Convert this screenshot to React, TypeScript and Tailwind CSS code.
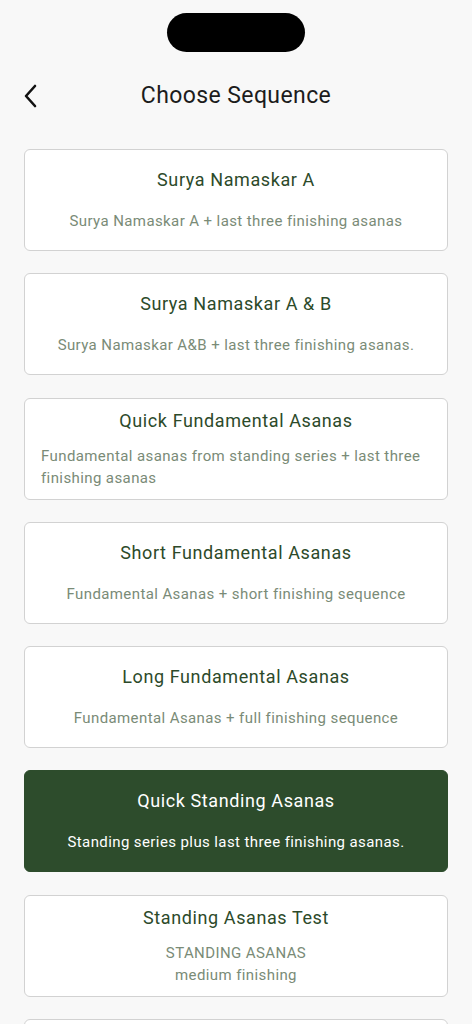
import React from "react";

type Seq = { title: string; lines: string[]; selected?: boolean };

const SEQUENCES: Seq[] = [
  { title: "Surya Namaskar A", lines: ["Surya Namaskar A + last three finishing asanas"] },
  { title: "Surya Namaskar A & B", lines: ["Surya Namaskar A&B + last three finishing asanas."] },
  {
    title: "Quick Fundamental Asanas",
    lines: ["Fundamental asanas from standing series + last three finishing asanas"],
  },
  { title: "Short Fundamental Asanas", lines: ["Fundamental Asanas + short finishing sequence"] },
  { title: "Long Fundamental Asanas", lines: ["Fundamental Asanas + full finishing sequence"] },
  {
    title: "Quick Standing Asanas",
    lines: ["Standing series plus last three finishing asanas."],
    selected: true,
  },
  { title: "Standing Asanas Test", lines: ["STANDING ASANAS", "medium finishing"] },
  { title: "Full Standing Asanas", lines: ["Standing series + full finishing sequence"] },
];

const SequenceCard = ({ seq, index }: { seq: Seq; index: number }) => {
  // the wrapped one (index 2) sits left-aligned and tighter
  const multi = seq.lines.length > 1 || index === 2;
  return (
    <button
      className={`w-full h-[102px] shrink-0 rounded-[6px] border flex flex-col items-center justify-center px-4 ${
        seq.selected ? "bg-[#2d4c2c] border-[#2d4c2c]" : "bg-white border-[#d2d2d2]"
      }`}
    >
      <div
        className={`text-[18px] leading-[24px] tracking-[0.6px] ${
          multi ? "mt-[1px]" : ""
        } ${seq.selected ? "text-white" : "text-[#2c4a2a]"}`}
      >
        {seq.title}
      </div>
      <div
        className={`text-[15px] leading-[22px] tracking-[0.4px] ${
          multi ? "mt-[12px]" : "mt-[18px]"
        } ${index === 2 ? "text-left" : "text-center"} ${
          seq.selected ? "text-white" : "text-[#7a8b77]"
        }`}
      >
        {seq.lines.map((l) => (
          <div key={l}>{l}</div>
        ))}
      </div>
    </button>
  );
};

export default function App() {
  return (
    <div
      className="w-[472px] h-[1024px] overflow-hidden bg-[#f8f8f8]"
      style={{ fontFamily: "Roboto, 'Noto Sans', sans-serif" }}
    >
      <div className="flex justify-center pt-[13px]">
        <div className="w-[138px] h-[39px] rounded-full bg-black" />
      </div>

      <div className="relative flex items-center justify-center h-[44px] mt-[22px]">
        <button className="absolute left-[22px] top-[10px]">
          <svg width="18" height="24" viewBox="0 0 18 24" fill="none">
            <path d="M13 2 L4 12 L13 22" stroke="#111" strokeWidth="2.6" strokeLinecap="round" strokeLinejoin="round" />
          </svg>
        </button>
        <h1 className="text-[23px] text-[#1c1c1c] tracking-[0.4px]">Choose Sequence</h1>
      </div>

      <div className="flex flex-col gap-[22.3px] px-[24px] mt-[31px]">
        {SEQUENCES.map((s, i) => (
          <SequenceCard key={s.title} seq={s} index={i} />
        ))}
      </div>
    </div>
  );
}
